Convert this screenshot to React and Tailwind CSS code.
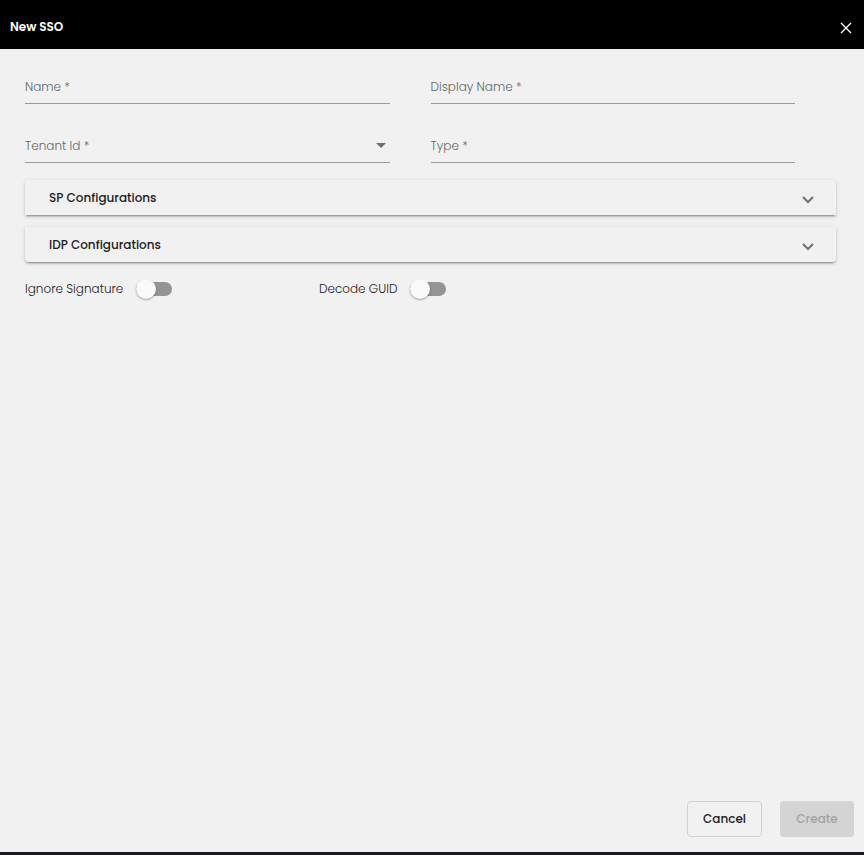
import { useState } from "react";
import { clsx } from "clsx";

const FieldLabel = ({ id, label, floating }) => (
  <label
    htmlFor={id}
    className={clsx(
      "absolute left-0 pointer-events-none font-light text-[#666]",
      floating ? "-top-3 text-[10px]" : "top-0 text-xs leading-5"
    )}
  >
    {label} *
  </label>
);

const TextField = ({ id, label }) => {
  const [value, setValue] = useState("");

  return (
    <div className="relative w-[90%] border-b border-[#9b9b9b]">
      <FieldLabel id={id} label={label} floating={value !== ""} />
      <input
        id={id}
        type="text"
        required
        value={value}
        onChange={(e) => setValue(e.target.value)}
        className="block w-full h-[26px] pb-[6px] bg-transparent text-xs outline-none"
      />
    </div>
  );
};

const SelectField = ({ id, label, options }) => {
  const [value, setValue] = useState("");

  return (
    <div className="relative w-[90%] border-b border-[#9b9b9b]">
      <FieldLabel id={id} label={label} floating={value !== ""} />
      <select
        id={id}
        required
        value={value}
        onChange={(e) => setValue(e.target.value)}
        className="block w-full h-[26px] pb-[6px] appearance-none bg-transparent text-xs outline-none"
      >
        <option value="" />
        {options.map((option) => (
          <option key={option} value={option}>
            {option}
          </option>
        ))}
      </select>
      <svg
        viewBox="0 0 10 5"
        className="absolute right-1 top-[7px] w-[10px] h-[5px] pointer-events-none"
      >
        <path d="M0 0h10L5 5z" fill="#6e6e6e" />
      </svg>
    </div>
  );
};

const Panel = ({ title, className }) => {
  const [open, setOpen] = useState(false);

  return (
    <section
      className={clsx(
        "bg-[#f1f1f1] shadow-[0_3px_1px_-2px_rgba(0,0,0,0.2),0_2px_2px_0_rgba(0,0,0,0.14),0_1px_5px_0_rgba(0,0,0,0.12)]",
        className
      )}
    >
      <button
        type="button"
        aria-expanded={open}
        onClick={() => setOpen(!open)}
        className="flex w-full h-[35px] items-center justify-between pl-6 pr-[22px] text-xs font-medium text-[#1c1c1c]"
      >
        {title}
        <svg
          viewBox="0 0 12 8"
          className={clsx("w-3 h-2 mt-1", open && "rotate-180")}
        >
          <path
            d="M1 1l5 5 5-5"
            fill="none"
            stroke="#717171"
            strokeWidth="2"
          />
        </svg>
      </button>
      {open && <div className="h-16" />}
    </section>
  );
};

const Toggle = ({ id, label }) => (
  <div className="flex items-center gap-[13px]">
    <label htmlFor={id} className="text-xs leading-5 font-light text-[#1c1c1c]">
      {label}
    </label>
    <input
      id={id}
      type="checkbox"
      role="switch"
      className="relative w-9 h-[14px] shrink-0 appearance-none rounded-full bg-[#949494] before:absolute before:-top-[3px] before:left-0 before:size-5 before:rounded-full before:bg-[#fafafa] before:shadow-[0_1px_2px_rgba(0,0,0,0.35)] checked:before:left-4"
    />
  </div>
);

const App = () => {
  return (
    <form
      onSubmit={(e) => e.preventDefault()}
      className="flex flex-col min-h-screen bg-[#f1f1f1] border-b-3 border-[#1b1b1d] font-[Poppins,Inter,sans-serif]"
    >
      <header className="flex h-[49px] items-center justify-between bg-black pl-[10px] pr-3 pt-1 text-white">
        <h1 className="text-xs font-semibold">New SSO</h1>
        <button type="button" aria-label="Close" className="pt-[2px]">
          <svg viewBox="0 0 12 12" className="size-3">
            <path
              d="M1 1l10 10M11 1L1 11"
              fill="none"
              stroke="currentColor"
              strokeWidth="1.4"
            />
          </svg>
        </button>
      </header>

      <main className="flex-1 pl-[25px] pr-7 pt-7">
        <div className="grid grid-cols-2 gap-y-8">
          <TextField id="name" label="Name" />
          <TextField id="displayName" label="Display Name" />
          <SelectField id="tenantId" label="Tenant Id" options={["Default"]} />
          <TextField id="type" label="Type" />
        </div>

        <div className="mt-[17px] flex flex-col gap-3">
          <Panel title="SP Configurations" className="rounded-t" />
          <Panel title="IDP Configurations" className="rounded-b" />
        </div>

        <div className="mt-[17px] flex">
          <div className="w-[294px]">
            <Toggle id="ignoreSignature" label="Ignore Signature" />
          </div>
          <Toggle id="decodeGuid" label="Decode GUID" />
        </div>
      </main>

      <footer className="flex justify-end gap-[18px] pr-[10px] pb-[15px] text-xs font-medium">
        <button
          type="button"
          className="w-[75px] h-9 rounded border border-[#d2d2d2] text-[#1c1c1c]"
        >
          Cancel
        </button>
        <button
          type="submit"
          disabled
          className="w-[74px] h-9 rounded bg-[#d4d4d4] text-[#a3a3a3]"
        >
          Create
        </button>
      </footer>
    </form>
  );
};

export default App;
